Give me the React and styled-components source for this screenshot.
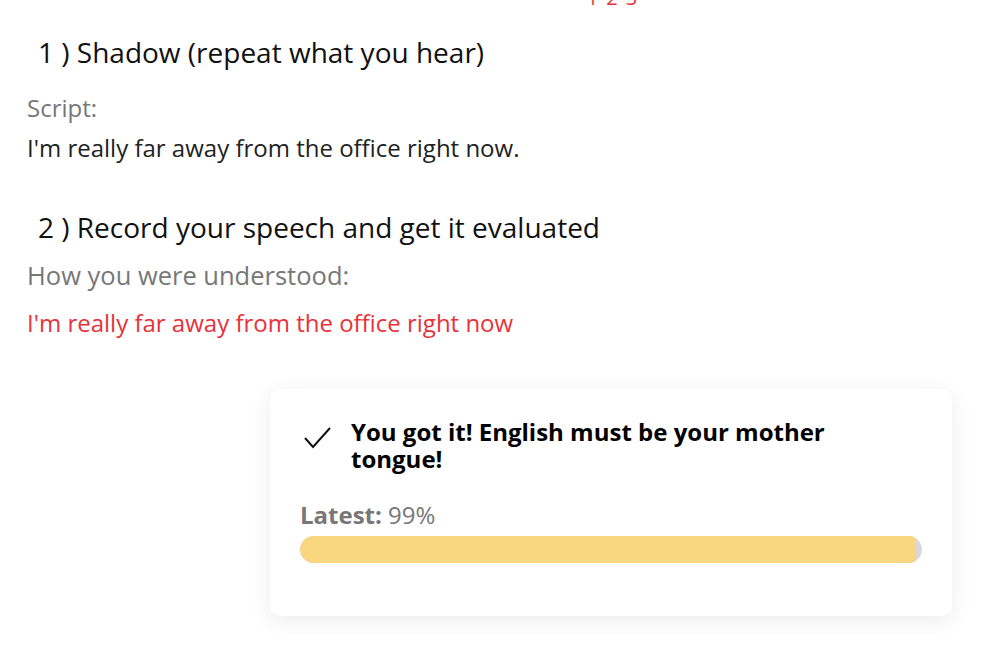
import React from "react";
import styled, { createGlobalStyle } from "styled-components";

const GlobalStyle = createGlobalStyle`
  html, body {
    margin: 0;
    padding: 0;
    background: #fff;
    font-family: "Open Sans", "Noto Sans", sans-serif;
    overflow: hidden;
  }
`;

const Page = styled.div`
  width: 987px;
  height: 647px;
  padding: 0 27px;
  box-sizing: border-box;
`;

const Steps = styled.div`
  display: flex;
  justify-content: center;
  gap: 8px;
  margin-top: -12px;
  padding-left: 237px;
  height: 20px;
  font-size: 20px;
  line-height: 20px;
  color: #e8323a;
`;

const Heading = styled.h2`
  margin: ${p => p.top}px 0 0 11px;
  font-size: 28px;
  font-weight: 500;
  line-height: 34px;
  color: #111;
`;

const Label = styled.div`
  margin-top: ${p => p.top}px;
  font-size: ${p => p.size}px;
  line-height: 32px;
  color: #777;
`;

const Line = styled.div`
  margin-top: ${p => p.top}px;
  font-size: 24px;
  line-height: 32px;
  color: ${p => p.color};
`;

const CardRow = styled.div`
  display: flex;
  justify-content: flex-end;
  margin-top: 50px;
  padding-right: 8px;
`;

const Card = styled.div`
  width: 682px;
  height: 227px;
  box-sizing: border-box;
  padding: 29px 30px 0 30px;
  background: #fff;
  border-radius: 10px;
  box-shadow: 0 5px 22px rgba(0, 0, 0, 0.08);
`;

const Result = styled.div`
  display: flex;
  align-items: flex-start;
  gap: 20px;
  padding-left: 4px;
  padding-right: 60px;
`;

const Check = styled.svg`
  flex: none;
  margin-top: 9px;
`;

const ResultText = styled.div`
  max-width: 520px;
  font-size: 24px;
  font-weight: 700;
  line-height: 27px;
  color: #000;
`;

const Latest = styled.div`
  margin-top: 28px;
  font-size: 24px;
  line-height: 30px;
  color: #777;

  b {
    font-weight: 700;
  }
`;

const Track = styled.div`
  margin-top: 6px;
  height: 27px;
  border-radius: 14px;
  background: #d9d9d9;
  overflow: hidden;
`;

const Fill = styled.div`
  height: 100%;
  background: #f8d780;
  border-radius: 14px 3px 3px 14px;
`;

export default function App() {
  const score = 99;
  return (
    <>
      <GlobalStyle />
      <Page>
        <Steps>
          <span>1</span>
          <span>2</span>
          <span>3</span>
        </Steps>
        <Heading top={27}>1 ) Shadow (repeat what you hear)</Heading>
        <Label top={23} size={24}>Script:</Label>
        <Line top={8} color="#222">I'm really far away from the office right now.</Line>
        <Heading top={46}>2 ) Record your speech and get it evaluated</Heading>
        <Label top={15} size={25.5}>How you were understood:</Label>
        <Line top={16} color="#e8323a">I'm really far away from the office right now</Line>
        <CardRow>
          <Card>
            <Result>
              <Check width="27" height="22" viewBox="0 0 27 22">
                <path d="M1 11 L9 20 L26 1" fill="none" stroke="#111" strokeWidth="2" />
              </Check>
              <ResultText>You got it! English must be your mother tongue!</ResultText>
            </Result>
            <Latest>
              <b>Latest:</b> {score}%
            </Latest>
            <Track>
              <Fill style={{ width: `${score}%` }} />
            </Track>
          </Card>
        </CardRow>
      </Page>
    </>
  );
}
